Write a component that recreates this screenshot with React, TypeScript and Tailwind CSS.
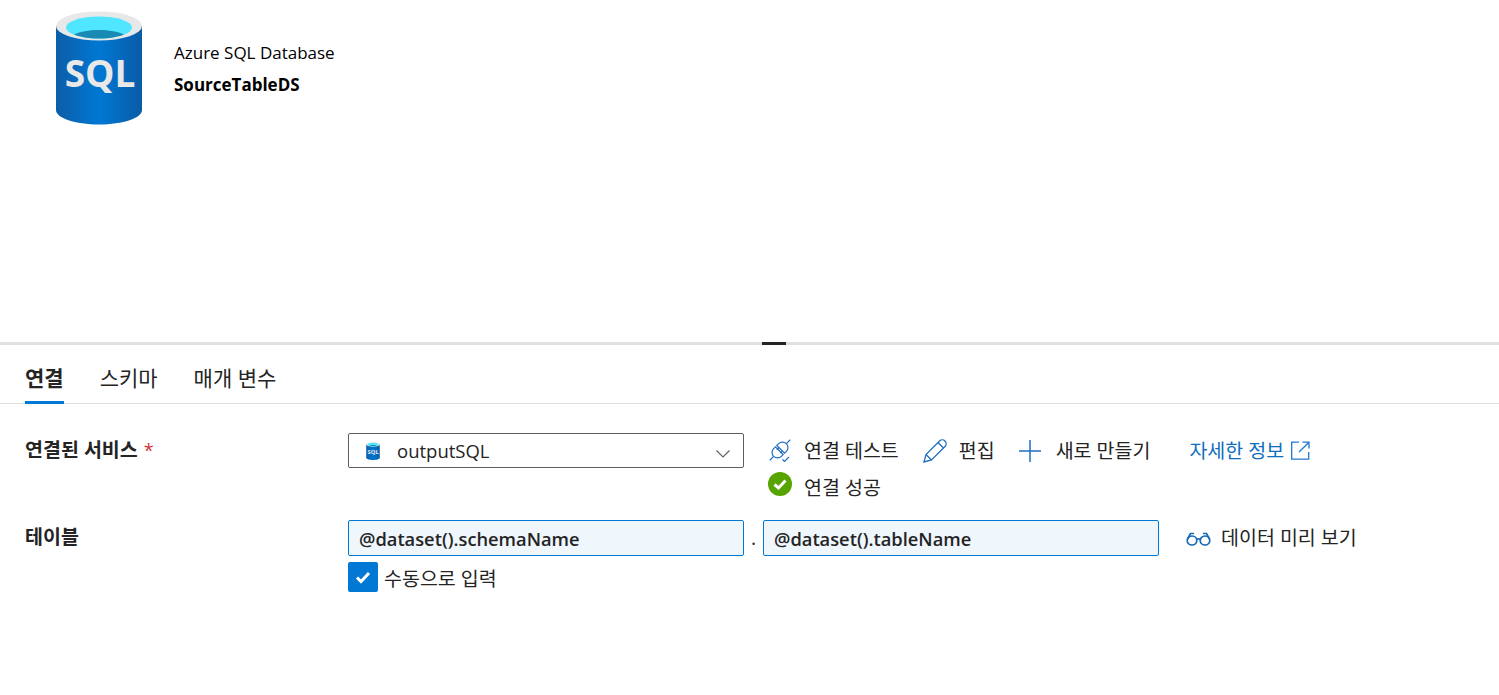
import React from "react";

const FONT = "font-['Open_Sans','Noto_Sans_CJK_KR',sans-serif]";

function SqlIcon({ className, id }: { className: string; id: string }) {
  return (
    <svg viewBox="0 0 86 114" className={className}>
      <defs>
        <linearGradient id={id} x1="0" x2="1" y1="0" y2="0">
          <stop offset="0" stopColor="#0d5da8" />
          <stop offset="0.5" stopColor="#0078d4" />
          <stop offset="1" stopColor="#0a5ba6" />
        </linearGradient>
      </defs>
      <path d="M0 15V99C0 107 19 113.500 43 113.500S86 107 86 99V15Z" fill={`url(#${id})`} />
      <ellipse cx="43" cy="15" rx="43" ry="14.500" fill="#e8e8e8" />
      <ellipse cx="43" cy="16.500" rx="33" ry="11" fill="#50e6ff" />
      <path d="M18 23.500C24 20.500 33 19 43 19S62 20.500 68 23.500C62 26 53 27.500 43 27.500S24 26 18 23.500Z" fill="#198ab3" />
      <text x="44" y="76" textAnchor="middle" fontFamily="'Open Sans',sans-serif" fontWeight="700" fontSize="37" fill="#e8e8e8">SQL</text>
    </svg>
  );
}

function PlugCheck() {
  return (
    <svg viewBox="0 0 24 24" className="w-6 h-6" fill="none" stroke="#1f6fc0" strokeWidth="1.200">
      <g transform="rotate(-45 12 11)">
        <path d="M-2.500 11H3M21 11H26.500" />
        <path d="M11 5.500H8.500A5.500 5.500 0 0 0 8.500 16.500H11Z" />
        <path d="M13 5.500H15.500A5.500 5.500 0 0 1 15.500 16.500H13Z" />
        <path d="M13 8.500H10M13 13.500H10" />
      </g>
      <path d="m14.500 20.500 2 2 4.500-4.500" />
    </svg>
  );
}

function Pencil() {
  return (
    <svg viewBox="0 0 24 24" className="w-6 h-6" fill="none" stroke="#1f6fc0" strokeWidth="1.300">
      <path d="M1 23 3 15.500 16.500 2C18 .5 20.500.5 22 2S23.500 6 22 7.500L8.500 21Z" />
      <path d="M15 3.500 20.500 9M3 15.500 8.500 21" />
    </svg>
  );
}

function Plus() {
  return (
    <svg viewBox="0 0 24 24" className="w-6 h-6" fill="none" stroke="#1f6fc0" strokeWidth="1.500">
      <path d="M12 1v22M1 12h22" />
    </svg>
  );
}

function External() {
  return (
    <svg viewBox="0 0 19 19" className="w-[19px] h-[19px]" fill="none" stroke="#1f78d1" strokeWidth="1.300">
      <path d="M8 1.200H.7v17h17V11" />
      <path d="M8 11 18 1.200M11.500 1.200h6.500V7.500" />
    </svg>
  );
}

function Glasses() {
  return (
    <svg viewBox="0 0 25 15" className="w-[25px] h-[15px]" fill="none" stroke="#1668b8" strokeWidth="1.700">
      <ellipse cx="6" cy="9.500" rx="4.800" ry="4.500" />
      <ellipse cx="19" cy="9.500" rx="4.800" ry="4.500" />
      <path d="M10.500 8.500c1-1 3-1 4 0M1.500 8 4.500 2.500H8M23.500 8 20.500 2.500H17" />
    </svg>
  );
}

export default function App() {
  return (
    <div className={`${FONT} w-[1499px] h-[695px] bg-white overflow-hidden text-[#242424]`}>
      <header className="h-[342px] pl-[56px] pt-[11px] flex items-start gap-8">
        <SqlIcon id="big" className="w-[86px] h-[114px]" />
        <div className="pt-[31px] text-black">
          <div className="text-[17px] leading-[22px]">Azure SQL Database</div>
          <div className="text-[17px] leading-[22px] font-bold mt-[10px]">SourceTableDS</div>
        </div>
      </header>

      <div className="h-[3px] bg-[#e0e0e0] flex justify-center pl-[49px]">
        <div className="w-6 h-[3px] bg-[#242424]" />
      </div>

      <nav className="h-[59px] px-[25px] flex items-stretch gap-[36px] border-b border-[#e0e0e0] text-[21px]">
        <div className="pt-[18px] font-bold border-b-[3px] border-[#0078d4] -mb-px">연결</div>
        <div className="pt-[18px]">스키마</div>
        <div className="pt-[18px]">매개 변수</div>
      </nav>

      <section className="pt-[29px] pl-[25px] text-[19.5px]">
        <div className="flex h-[87px]">
          <div className="w-[323px] font-bold leading-[34px]">
            연결된 서비스 <span className="text-[#d13438] font-normal text-[18px] ml-px">*</span>
          </div>
          <div className="w-[396px] h-[35px] border border-[#605e5c] rounded-[2px] flex items-center pl-[17px] pr-[13px]">
            <SqlIcon id="small" className="w-[14px] h-[18px]" />
            <span className="ml-[17px] flex-1 text-[18.5px]">outputSQL</span>
            <svg viewBox="0 0 14 8" className="w-[14px] h-2 mt-[6px]" fill="none" stroke="#605e5c" strokeWidth="1.100">
              <path d="M.5.500 7 7 13.500.500" />
            </svg>
          </div>
          <div className="ml-[24px] flex flex-col gap-[4px]">
            <div className="flex items-center h-[35px]">
              <PlugCheck />
              <span className="ml-[12px]">연결 테스트</span>
              <span className="ml-[24px]"><Pencil /></span>
              <span className="ml-[12px]">편집</span>
              <span className="ml-[23px]"><Plus /></span>
              <span className="ml-[14px]">새로 만들기</span>
              <span className="ml-[39px] text-[#106ebe]">자세한 정보</span>
              <span className="ml-[7px]"><External /></span>
            </div>
            <div className="flex items-start h-6">
              <span className="w-6 h-6 rounded-full bg-[#57a300] flex items-center justify-center">
                <svg viewBox="0 0 16 16" className="w-4 h-4" fill="none" stroke="#fff" strokeWidth="3">
                  <path d="M2.500 8.500 6.500 12 13.500 4.500" />
                </svg>
              </span>
              <span className="ml-[12px] leading-[31px]">연결 성공</span>
            </div>
          </div>
        </div>

        <div className="flex">
          <div className="w-[323px] font-bold leading-[34px]">테이블</div>
          <div>
            <div className="flex items-center">
              <div className="w-[396px] h-[36px] border border-[#0078d4] rounded-[2px] bg-[#eff6fc] px-[10px] pt-[2px] flex items-center font-semibold text-[18.3px]">@dataset().schemaName</div>
              <div className="w-[19px] text-center">.</div>
              <div className="w-[396px] h-[36px] border border-[#0078d4] rounded-[2px] bg-[#eff6fc] px-[10px] pt-[2px] flex items-center font-semibold text-[18.3px]">@dataset().tableName</div>
              <span className="ml-[27px]"><Glasses /></span>
              <span className="ml-[10px]">데이터 미리 보기</span>
            </div>
            <div className="flex items-start h-[30px] mt-[6px]">
              <span className="w-[30px] h-[30px] rounded-[2px] bg-[#0078d4] flex items-center justify-center">
                <svg viewBox="0 0 16 16" className="w-4 h-4" fill="none" stroke="#fff" strokeWidth="3">
                  <path d="M2 8.500 6 12.500 14 4" />
                </svg>
              </span>
              <span className="ml-[6px] leading-[33px]">수동으로 입력</span>
            </div>
          </div>
        </div>
      </section>
    </div>
  );
}
